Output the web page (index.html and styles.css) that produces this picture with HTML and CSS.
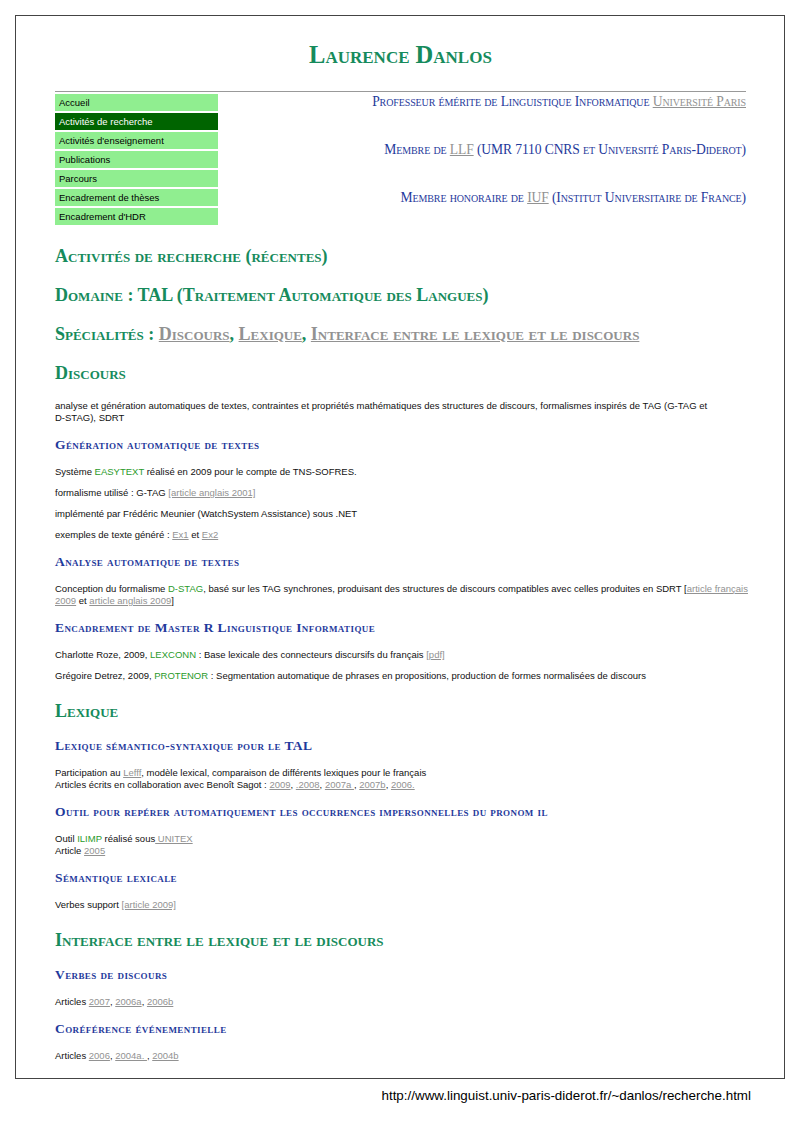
FILE: index.html
```html
<!DOCTYPE html>
<html lang="fr">
<head>
<meta charset="utf-8">
<title>Laurence Danlos - Recherche</title>
<link rel="stylesheet" href="styles.css">
</head>
<body>
<div class="page">
  <h1 class="title">Laurence Danlos</h1>
  <hr class="rule">
  <div class="top">
    <ul class="menu">
      <li><a href="#">Accueil</a></li>
      <li class="active"><a href="#">Activités de recherche</a></li>
      <li><a href="#">Activités d'enseignement</a></li>
      <li><a href="#">Publications</a></li>
      <li><a href="#">Parcours</a></li>
      <li><a href="#">Encadrement de thèses</a></li>
      <li><a href="#">Encadrement d'HDR</a></li>
    </ul>
    <div class="roles">
      <p class="role">Professeur émérite de Linguistique Informatique <a class="lnk" href="#">Université Paris</a></p>
      <p class="role">Membre de <a class="lnk" href="#">LLF</a> (UMR 7110 CNRS et Université Paris-Diderot)</p>
      <p class="role">Membre honoraire de <a class="lnk" href="#">IUF</a> (Institut Universitaire de France)</p>
    </div>
  </div>

  <h2>Activités de recherche (récentes)</h2>
  <h2>Domaine : TAL (Traitement Automatique des Langues)</h2>
  <h2>Spécialités : <a class="lnk" href="#">Discours</a>, <a class="lnk" href="#">Lexique</a>, <a class="lnk" href="#">Interface entre le lexique et le discours</a></h2>
  <h2>Discours</h2>
  <p>analyse et génération automatiques de textes, contraintes et propriétés mathématiques des structures de discours, formalismes inspirés de TAG (G-TAG et <span class="nw">D-STAG),</span> SDRT</p>

  <h3>Génération automatique de textes</h3>
  <p>Système <span class="g">EASYTEXT</span> réalisé en 2009 pour le compte de TNS-SOFRES.</p>
  <p>formalisme utilisé : G-TAG <a class="lnk" href="#">[article anglais 2001]</a></p>
  <p>implémenté par Frédéric Meunier (WatchSystem Assistance) sous .NET</p>
  <p>exemples de texte généré : <a class="lnk" href="#">Ex1</a> et <a class="lnk" href="#">Ex2</a></p>

  <h3>Analyse automatique de textes</h3>
  <p class="wide">Conception du formalisme <span class="g">D-STAG</span>, basé sur les TAG synchrones, produisant des structures de discours compatibles avec celles produites en SDRT [<a class="lnk" href="#">article français 2009</a> et <a class="lnk" href="#">article anglais 2009</a>]</p>

  <h3>Encadrement de Master R Linguistique Informatique</h3>
  <p>Charlotte Roze, 2009, <span class="g">LEXCONN</span> : Base lexicale des connecteurs discursifs du français <a class="lnk" href="#">[pdf]</a></p>
  <p>Grégoire Detrez, 2009, <span class="g">PROTENOR</span> : Segmentation automatique de phrases en propositions, production de formes normalisées de discours</p>

  <h2>Lexique</h2>
  <h3>Lexique sémantico-syntaxique pour le TAL</h3>
  <p>Participation au <a class="lnk" href="#">Lefff</a>, modèle lexical, comparaison de différents lexiques pour le français<br>Articles écrits en collaboration avec Benoît Sagot : <a class="lnk" href="#">2009</a>, <a class="lnk" href="#">.2008</a>, <a class="lnk" href="#">2007a </a>, <a class="lnk" href="#">2007b</a>, <a class="lnk" href="#">2006.</a></p>

  <h3>Outil pour repérer automatiquement les occurrences impersonnelles du pronom il</h3>
  <p>Outil <span class="g">ILIMP</span> réalisé sous<a class="lnk" href="#"> UNITEX</a><br>Article <a class="lnk" href="#">2005</a></p>

  <h3>Sémantique lexicale</h3>
  <p>Verbes support <a class="lnk" href="#">[article 2009]</a></p>

  <h2>Interface entre le lexique et le discours</h2>
  <h3>Verbes de discours</h3>
  <p>Articles <a class="lnk" href="#">2007</a>, <a class="lnk" href="#">2006a</a>, <a class="lnk" href="#">2006b</a></p>
  <h3>Coréférence événementielle</h3>
  <p>Articles <a class="lnk" href="#">2006</a>, <a class="lnk" href="#">2004a. </a>, <a class="lnk" href="#">2004b</a></p>
</div>
<div class="url">http://www.linguist.univ-paris-diderot.fr/~danlos/recherche.html</div>
</body>
</html>
```

FILE: styles.css
```css
html, body {
  margin: 0;
  padding: 0;
  background: #fff;
}

body {
  font-family: "Liberation Sans", Arial, sans-serif;
  color: #111;
}

.page {
  margin: 15px 15px 0 15px;
  border: 1px solid #444;
  padding: 25px 38px 7px 39px;
}

.title {
  margin: 0;
  text-align: center;
  font-family: "Liberation Serif", "Times New Roman", serif;
  font-variant: small-caps;
  font-weight: bold;
  font-size: 24.5px;
  line-height: 28px;
  color: #168b5c;
}

.rule {
  margin: 22px 0 0 0;
  border: 0;
  border-top: 1px solid #999;
  height: 0;
}

.top {
  display: flex;
  justify-content: space-between;
  align-items: flex-start;
  margin-top: 2px;
  padding-bottom: 2px;
}

.menu {
  list-style: none;
  margin: 0;
  padding: 0;
  width: 163px;
  flex: none;
}

.menu li {
  background: #90ee90;
  height: 17px;
  line-height: 17px;
  margin-bottom: 2px;
  font-size: 9.5px;
}

.menu li:last-child {
  margin-bottom: 0;
}

.menu li a {
  display: block;
  padding-left: 4px;
  color: #000;
  text-decoration: none;
}

.menu li.active {
  background: #006400;
}

.menu li.active a {
  color: #fff;
}

.roles {
  text-align: right;
}

.role {
  margin: 0 0 32px 0;
  font-family: "Liberation Serif", "Times New Roman", serif;
  font-variant: small-caps;
  font-size: 13.6px;
  letter-spacing: -0.12px;
  line-height: 16px;
  color: #1f3a9c;
}

.role:last-child {
  margin-bottom: 0;
}

.lnk {
  color: #929292;
  text-decoration: underline;
}

h2 {
  margin: 19px 0 17px 0;
  font-family: "Liberation Serif", "Times New Roman", serif;
  font-variant: small-caps;
  font-weight: bold;
  font-size: 18px;
  line-height: 20px;
  color: #168b5c;
}

h3 {
  margin: 13px 0 13px 0;
  font-family: "Liberation Serif", "Times New Roman", serif;
  font-variant: small-caps;
  font-weight: bold;
  font-size: 13.5px;
  letter-spacing: 0.4px;
  line-height: 16px;
  color: #1f3a9c;
}

p {
  margin: 9px 0;
  font-size: 9.5px;
  line-height: 12px;
  color: #111;
}

p.wide {
  margin-right: -6px;
}

.nw {
  white-space: nowrap;
}

.g {
  color: #2a9a2a;
}

.url {
  text-align: right;
  margin: 9px 49px 0 0;
  font-size: 13.4px;
  line-height: 16px;
  color: #000;
}
```
